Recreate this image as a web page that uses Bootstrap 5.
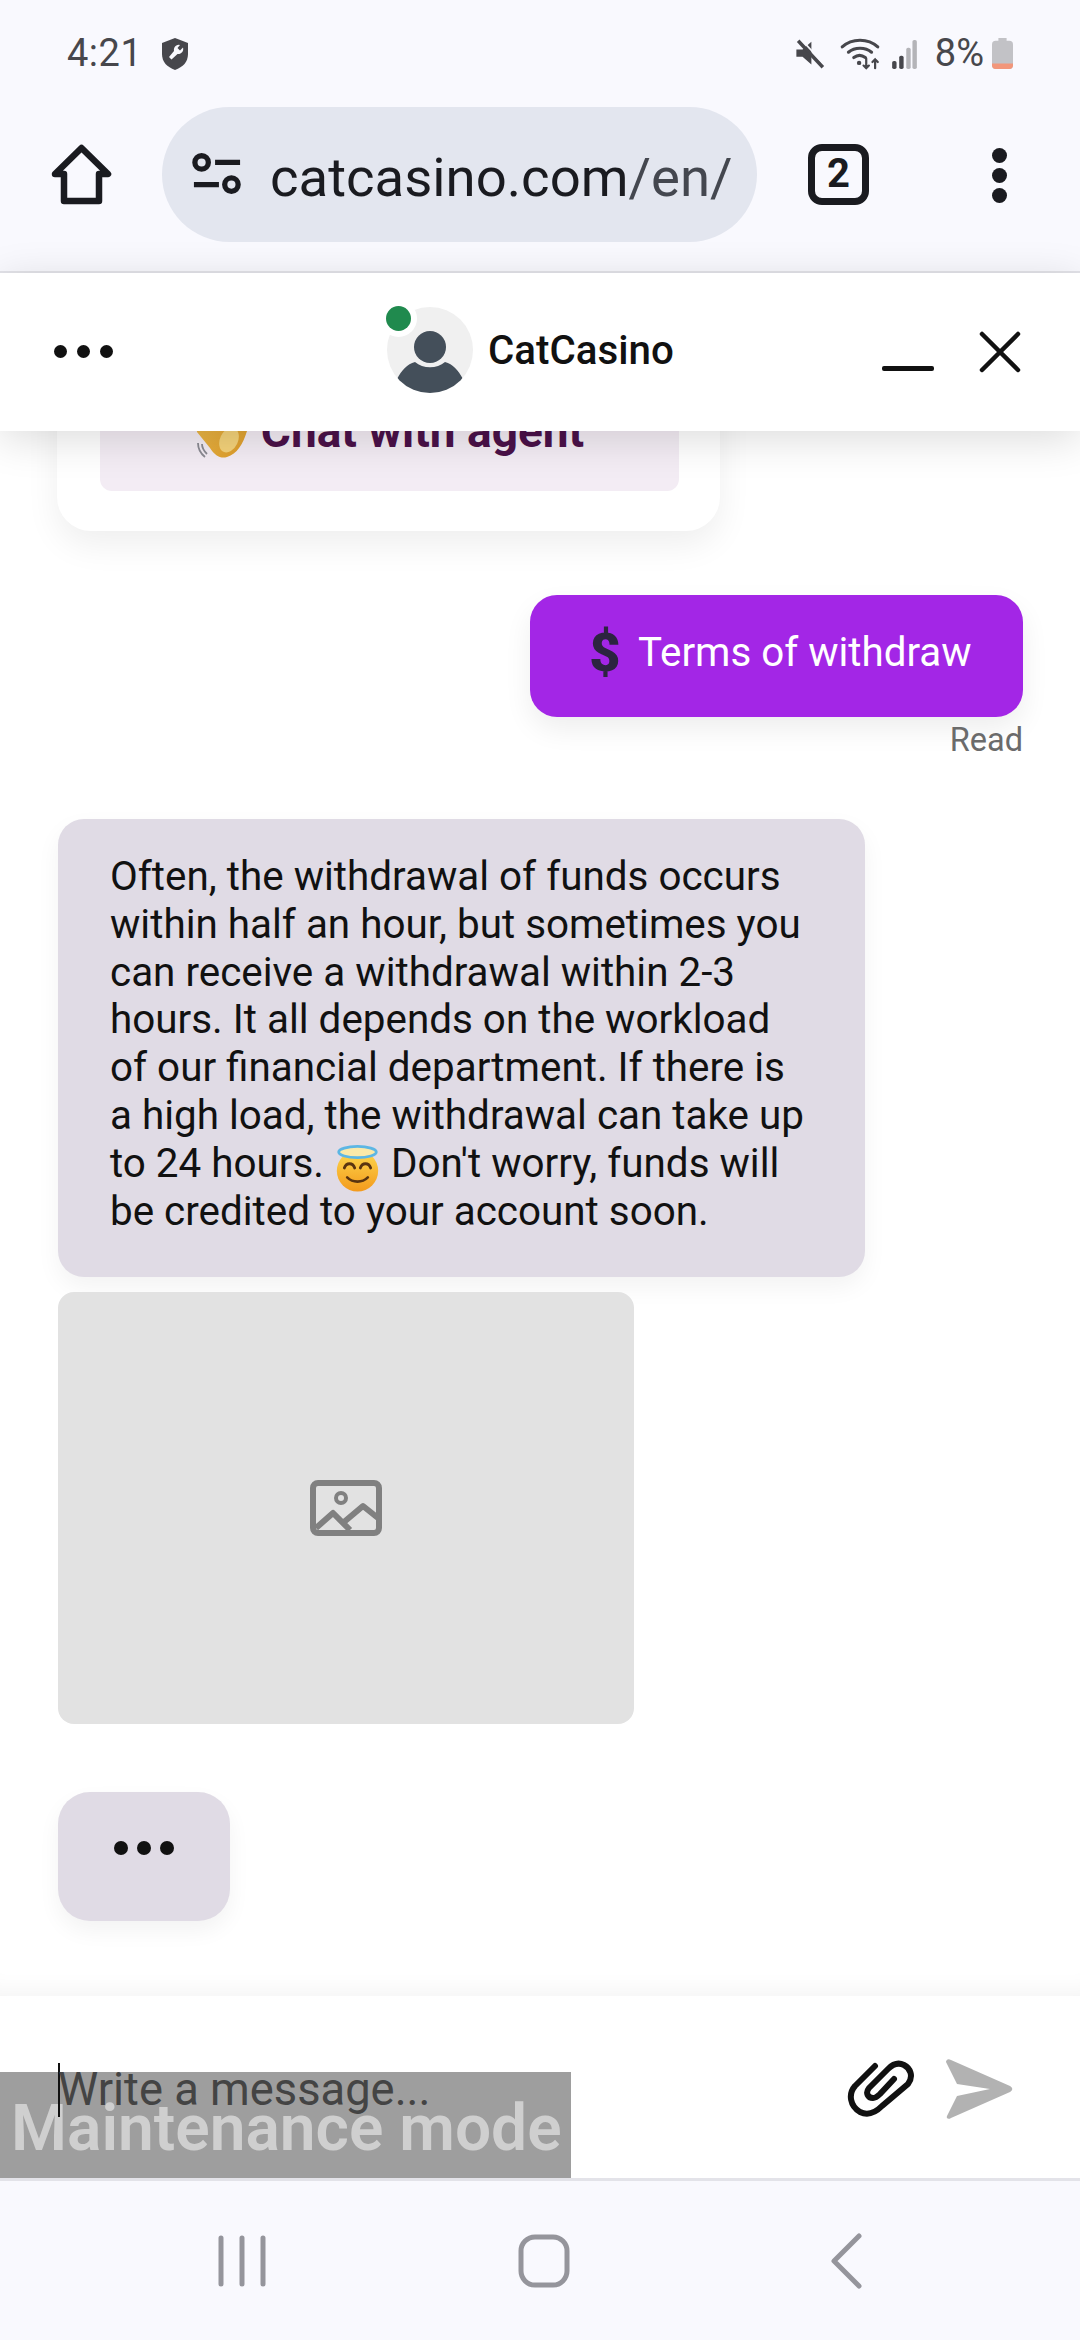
<!DOCTYPE html>
<html lang="en">
<head>
<meta charset="utf-8">
<title>CatCasino</title>
<link href="https://cdn.jsdelivr.net/npm/bootstrap@5.3.0/dist/css/bootstrap.min.css" rel="stylesheet">
<style>
html,body{height:2340px;overflow:hidden;background:#fff}
body{font-family:Roboto,"Liberation Sans",sans-serif;color:#141218}
.phone{height:2340px;width:1080px}
.sys-bar{height:107px;background:#f9f9fe;padding:0 67px 0 67px;color:#47474c;font-size:38px}
.sys-time{margin-right:20px;letter-spacing:.5px}
.ico-mute{margin-right:13px}
.ico-wifi{margin-right:9px}
.ico-signal{margin-right:17px}
.ico-batt{margin-left:8px}
.toolbar{height:166px;background:#f9f9fe;padding-bottom:30px;border-bottom:2px solid #e3e3e9;position:relative}
.home-ico{position:relative;margin-left:51px;margin-right:50px;width:61px;height:61px}
.url-pill{width:595px;height:135px;background:#e3e6ef;border-radius:68px;padding-left:30px;font-size:54.500px;color:#1a1b20;white-space:nowrap}
.tune-ico{margin-right:28px;flex:none}
.url-txt{padding-top:8px}
.url-path{color:#44474f}
.tabs-box{margin-left:51px;width:61px;height:61px;border:7px solid #1a1b20;border-radius:14px;font-size:40px;font-weight:700;line-height:1;color:#1a1b20}
.kebab{margin-left:120px;width:20px;gap:5px;margin-top:3px}
.kebab i{display:block;width:15px;height:15px;border-radius:50%;background:#1a1b20}
.chat-head{height:158px;background:#fff;position:relative;z-index:3;box-shadow:0 8px 40px rgba(0,0,0,.14);padding:0 59px 0 54px}
.dots-row{gap:10px;margin-top:-2px}
.dots-row i{display:block;width:13px;height:13px;border-radius:50%;background:#111}
.agent{position:absolute;left:387px;top:34px;gap:15px}
.avatar-wrap{width:86px;height:86px;border-radius:50%;background:#f0f0f0;overflow:hidden}
.online-dot{position:absolute;left:-1px;top:-1px;width:25px;height:25px;border-radius:50%;background:#208a4e;box-shadow:0 0 0 6px #fff}
.agent-name{font-size:40.300px;font-weight:500;color:#111;padding-top:3px}
.win-min{margin-right:45px}
.chat-body{height:1565px;overflow:hidden;background:#fff;padding:0 57px 75px 58px;position:relative;box-shadow:inset 0 -26px 24px -22px rgba(0,0,0,.05)}
.hello-card{width:663px;height:200px;flex:none;background:#fff;border-radius:34px;box-shadow:0 14px 34px rgba(0,0,0,.065);padding:40px 41px 40px 43px;margin-left:-1px;margin-bottom:64px}
.agent-btn{height:120px;background:#f3ecf4;border-radius:12px;color:#4b1149;font-size:46px;font-weight:700;gap:14px;white-space:nowrap}
.out-bubble{width:493px;height:122px;flex:none;background:#a326e6;border-radius:27px;color:#fff;font-size:40.300px;padding:0 0 6px 58px;gap:16px;box-shadow:0 12px 28px rgba(0,0,0,.07);align-self:flex-end}
.dollar{color:#2c2440;font-size:54px;font-weight:900;line-height:1;width:34px;text-align:center}
.read-tag{align-self:flex-end;font-size:32.500px;line-height:38px;color:#6b6b6b;margin-top:4px;margin-bottom:60px;flex:none}
.in-bubble{width:807px;height:458px;background:#e0dbe5;border-radius:26px;padding:34px 52px 0 52px;font-size:40.400px;line-height:47.800px;color:#111;box-shadow:0 10px 24px rgba(0,0,0,.05);flex:none}
.angel{width:47px;height:50px;vertical-align:-4px;margin-block:-12px}
.img-holder{width:576px;height:432px;flex:none;background:#e2e2e2;border-radius:16px;margin-top:15px;margin-bottom:68px}
.typing{width:172px;height:129px;flex:none;background:#e0dbe5;border-radius:32px;padding-bottom:18px;gap:9px;box-shadow:0 10px 22px rgba(0,0,0,.05)}
.typing i{display:block;width:14px;height:14px;border-radius:50%;background:#111}
.composer{height:182px;background:#fff;position:relative;padding:0 66px 0 58px}
.caret-line{position:absolute;left:58px;top:67px;width:2px;height:54px;background:#111;z-index:2}
.placeholder-txt{font-size:45.300px;color:#444;position:relative;z-index:2;margin-top:6px}
.maint{position:absolute;left:0;bottom:0;width:571px;height:106px;background:#9e9e9e;color:#cfcfcf;font-size:64px;font-weight:600;line-height:1;padding:25px 0 0 11px;white-space:nowrap;z-index:1}
.composer-tools{gap:29px;margin-top:4px}
.sys-nav{height:162px;background:#f9f9fe;border-top:3px solid #e3e3e9;padding-left:91px}
.nav-cell{width:302px}
</style>
</head>
<body>
<div class="phone d-flex flex-column">
  <div class="sys-bar d-flex align-items-center justify-content-between">
    <div class="d-flex align-items-center"><span class="sys-time">4:21</span>
      <svg width="26" height="32" viewBox="0 0 26 32"><path d="M13 0 26 5v11c0 8-5 13-13 16C5 29 0 24 0 16V5z" fill="#47474c"/><path d="M18 7a5 5 0 0 0-6 6l-5 6 2.500 2.500 6-5.500a5 5 0 0 0 5.500-6.500l-3 3-2.500-2.500z" fill="#f9f9fe"/></svg>
    </div>
    <div class="d-flex align-items-center">
      <svg width="29" height="30" viewBox="0 0 32 34" class="ico-mute"><path d="M0 12h7l10-9v26l-10-9H0z" fill="#47474c"/><path d="M2 2 30 32" stroke="#47474c" stroke-width="4"/><path d="M5 0 31 28" stroke="#f9f9fe" stroke-width="2"/></svg>
      <svg width="44" height="32" viewBox="0 0 44 36" class="ico-wifi" fill="none" stroke="#47474c" stroke-width="3.500" stroke-linecap="round"><path d="M2 10c11-10 29-10 40 0"/><path d="M9 16c7-6 19-6 26 0"/><path d="M15 22c4-3 9-3 13 0"/><circle cx="21" cy="28" r="2.500" fill="#47474c" stroke="none"/><path d="M29 23v11m-3-3 3 3 3-3M39 34V24m-3 3 3-3 3 3" stroke-width="2.500"/></svg>
      <svg width="27" height="30" viewBox="0 0 28 34" class="ico-signal"><rect x="0" y="25" width="5" height="9" rx="2" fill="#47474c"/><rect x="8" y="19" width="5" height="15" rx="2" fill="#47474c"/><rect x="16" y="10" width="5" height="24" rx="2" fill="#b4b4b8"/><rect x="23" y="1" width="5" height="33" rx="2" fill="#b4b4b8"/></svg>
      <span>8%</span>
      <svg width="21" height="31" viewBox="0 0 23 34" class="ico-batt"><path d="M7 0h9v3h3a4 4 0 0 1 4 4v23a4 4 0 0 1-4 4H4a4 4 0 0 1-4-4V7a4 4 0 0 1 4-4h3z" fill="#c2c2c6"/><path d="M0 28h23v2a4 4 0 0 1-4 4H4a4 4 0 0 1-4-4z" fill="#f2967a"/></svg>
    </div>
  </div>
  <div class="toolbar d-flex align-items-center">
    <svg class="home-ico" viewBox="0 0 61 61" fill="none" stroke="#1a1b20" stroke-width="6.500" stroke-linejoin="round"><path d="M30.500 4 57 30H48V57H13V30H4z"/></svg>
    <div class="url-pill d-flex align-items-center">
      <svg width="50" height="44" viewBox="0 0 52 44" fill="none" stroke="#1a1b20" stroke-width="5.500" class="tune-ico"><circle cx="10" cy="10" r="7"/><path d="M24 10h26M2 33h26"/><circle cx="41" cy="33" r="7"/></svg>
      <span class="url-txt">catcasino.com<span class="url-path">/en/</span></span>
    </div>
    <div class="tabs-box d-flex align-items-center justify-content-center">2</div>
    <div class="kebab d-flex flex-column align-items-center"><i></i><i></i><i></i></div>
  </div>
  <div class="chat-head d-flex align-items-center justify-content-between">
    <div class="dots-row d-flex"><i></i><i></i><i></i></div>
    <div class="agent d-flex align-items-center">
      <div class="position-relative">
        <div class="avatar-wrap"><svg width="86" height="86" viewBox="0 0 86 86"><circle cx="43" cy="40" r="16" fill="#444f5a"/><path d="M10 72C15 63 20 57 28 55 36 62 50 62 58 55 66 57 71 63 76 72 68 82 56 87 43 87S18 82 10 72z" fill="#444f5a"/></svg></div>
        <span class="online-dot"></span>
      </div>
      <span class="agent-name">CatCasino</span>
    </div>
    <div class="d-flex align-items-center">
      <svg width="52" height="40" viewBox="0 0 52 40" class="win-min"><rect x="0" y="34" width="52" height="5" rx="2" fill="#111"/></svg>
      <svg width="42" height="42" viewBox="0 0 42 42" stroke="#111" stroke-width="4.500" stroke-linecap="round"><path d="M3 3 39 39M39 3 3 39"/></svg>
    </div>
  </div>
  <div class="chat-body d-flex flex-column justify-content-end">
    <div class="hello-card">
      <div class="agent-btn d-flex align-items-center justify-content-center">
        <svg width="52" height="54" viewBox="0 0 52 54"><defs><linearGradient id="hand" x1="0" y1="0" x2="1" y2="1"><stop offset="0" stop-color="#f0c050"/><stop offset="1" stop-color="#dc9a28"/></linearGradient></defs><path d="M0 0H52V27C48 40 42 50 32 53 26 55 20 52 15 44L2 28z" fill="url(#hand)"/><ellipse cx="34" cy="36" rx="9" ry="13" fill="#f4d27a" transform="rotate(25 34 36)"/><path d="M3 39c0 5 2 10 7 14M7 40c0 4 2 7 5 10" stroke="#8a8a92" stroke-width="1.800" fill="none"/></svg>
        <span>Chat with agent</span>
      </div>
    </div>
    <div class="out-bubble d-flex align-items-center"><span class="dollar">$</span><span>Terms of withdraw</span></div>
    <div class="read-tag">Read</div>
    <div class="in-bubble">Often, the withdrawal of funds occurs within half an hour, but sometimes you can receive a withdrawal within 2-3 hours. It all depends on the workload of our financial department. If there is a high load, the withdrawal can take up to 24 hours. <svg class="angel" viewBox="0 0 50 50"><defs><linearGradient id="fc" x1="0" y1="0" x2="0" y2="1"><stop offset="0" stop-color="#fdd84e"/><stop offset="1" stop-color="#f39a1c"/></linearGradient></defs><circle cx="25" cy="28" r="22" fill="url(#fc)"/><ellipse cx="25" cy="8" rx="20" ry="6" fill="#fbe9a8" stroke="#5cb6e4" stroke-width="3"/><path d="M11 25c2-6 9-6 11 0M28 25c2-6 9-6 11 0" fill="none" stroke="#5a3410" stroke-width="3" stroke-linecap="round"/><path d="M14 35c6 6 16 6 22 0" fill="none" stroke="#5a3410" stroke-width="2.800" stroke-linecap="round"/></svg> Don't worry, funds will be credited to your account soon.</div>
    <div class="img-holder d-flex align-items-center justify-content-center">
      <svg width="72" height="56" viewBox="0 0 72 56" fill="none" stroke="#808080" stroke-width="6" stroke-linejoin="round"><rect x="3" y="3" width="66" height="50" rx="5"/><circle cx="31" cy="18" r="5" stroke-width="4"/><path d="M6 48 23 33 40 50M34 42 53 26 68 38"/></svg>
    </div>
    <div class="typing d-flex align-items-center justify-content-center"><i></i><i></i><i></i></div>
  </div>
  <div class="composer d-flex align-items-center justify-content-between">
    <span class="caret-line"></span>
    <span class="placeholder-txt">Write a message...</span>
    <div class="maint">Maintenance mode</div>
    <div class="composer-tools d-flex align-items-center">
      <svg width="68" height="58" viewBox="17 22 68 58" fill="none" stroke="#111" stroke-width="6" stroke-linecap="round" stroke-linejoin="round"><path d="M45 28 25 48C18 56 20 68 30 74 38 78 46 74 52 68L78 46C84 38 80 30 74 27 68 24 62 27 58 31L39 50C35 55 38 60 43 60 46 60 48 58 50 56L64 41"/></svg>
      <svg width="70" height="65" viewBox="114 17 70 65"><path d="M116 22C116 20 118 18 121 20L180 46C183 48 183 50 180 52L121 78C118 80 116 78 117 76L127 56 160 49 127 44z" fill="#b2b2b2"/></svg>
    </div>
  </div>
  <div class="sys-nav d-flex align-items-center">
    <div class="nav-cell d-flex justify-content-center"><svg width="48" height="52" viewBox="0 0 48 52" stroke="#95959c" stroke-width="5" stroke-linecap="round"><path d="M3 3v46M24 3v46M45 3v46"/></svg></div>
    <div class="nav-cell d-flex justify-content-center"><svg width="52" height="54" viewBox="0 0 52 54" fill="none" stroke="#95959c" stroke-width="5"><rect x="3" y="3" width="46" height="48" rx="14"/></svg></div>
    <div class="nav-cell d-flex justify-content-center"><svg width="32" height="56" viewBox="0 0 32 56" fill="none" stroke="#95959c" stroke-width="5" stroke-linecap="round" stroke-linejoin="round"><path d="M29 3 4 28l25 25"/></svg></div>
  </div>
</div>
<script src="https://cdn.jsdelivr.net/npm/bootstrap@5.3.0/dist/js/bootstrap.bundle.min.js"></script>
</body>
</html>
